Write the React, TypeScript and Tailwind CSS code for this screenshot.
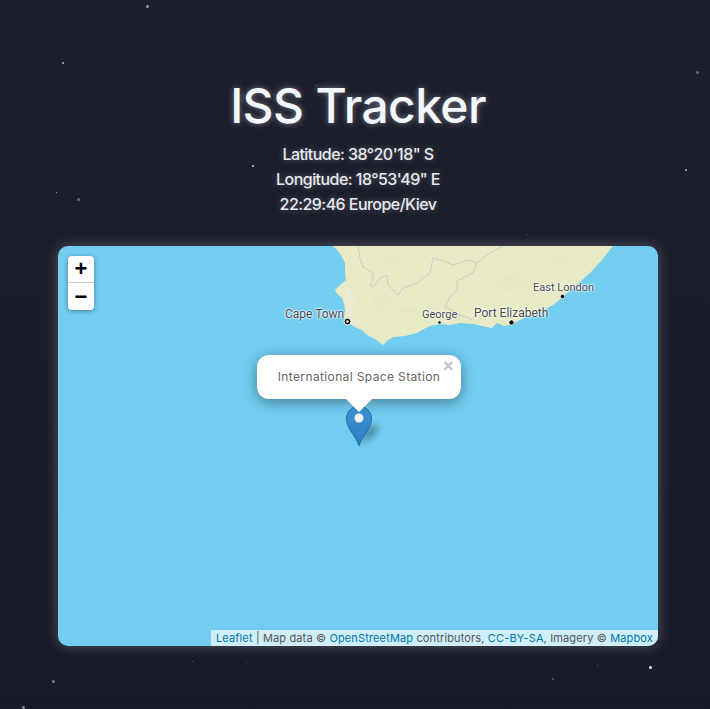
const stars: [number, number, number, number][] = [
  [147, 6, 3, 0.55],
  [63, 63, 2, 0.7],
  [56, 192, 1, 0.7],
  [78, 199, 3, 0.35],
  [125, 221, 1, 0.2],
  [206, 106, 1, 0.15],
  [697, 72, 3, 0.35],
  [686, 170, 2, 0.7],
  [558, 113, 1, 0.15],
  [527, 234, 1, 0.25],
  [253, 166, 2, 0.8],
  [650, 667, 3, 0.95],
  [597, 665, 1, 0.35],
  [553, 679, 2, 0.3],
  [246, 662, 1, 0.35],
  [192, 661, 1, 0.35],
  [53, 681, 3, 0.45],
  [23, 707, 3, 0.5],
  [441, 123, 1, 0.7],
  [316, 85, 1, 0.5],
];

const borders = [
  "M358 246 L360 258 L363 267 L373 273 L373 280 L370 286 L373 287 L380 278 L387 275 L388 285 L398 295 L403 288 L417 283 L430 273 L433 258 L443 261 L453 265 L467 260 L477 263 L487 255 L503 246",
  "M477 263 L473 273 L457 281 L457 290 L450 297 L445 307 L460 315 L458 320",
  "M460 315 L467 317 L472 320",
];

const patches = [
  "M375 290 L392 300 L385 312 L372 305 Z",
  "M398 308 L430 306 L425 313 L402 315 Z",
  "M490 280 L520 272 L530 285 L505 293 Z",
  "M550 258 L575 250 L570 262 L552 266 Z",
  "M380 260 L395 250 L400 262 L388 268 Z",
];

function CityLabel({ name, className }: { name: string; className: string }) {
  return (
    <span
      className={`absolute whitespace-nowrap font-['Roboto',sans-serif] text-[#4a4a52] [text-shadow:0_0_2px_#fff,0_0_2px_#fff,0_0_2px_#fff] ${className}`}
    >
      {name}
    </span>
  );
}

export default function App() {
  return (
    <div className="relative min-h-[709px] overflow-hidden bg-linear-to-b from-[#1c1f2c] to-[#191c28] font-['Inter',sans-serif]">
      {stars.map(([x, y, size, alpha]) => (
        <span
          key={`${x}-${y}`}
          className="absolute rounded-full bg-white"
          style={{ left: x - size / 2, top: y - size / 2, width: size, height: size, opacity: alpha }}
        />
      ))}

      <div className="relative flex flex-col items-center pl-[6px] pt-[75px]">
        <h1 className="text-[48px] leading-[62px] font-medium tracking-[-0.6px] text-[#f3f7ff] [text-shadow:0_0_6px_#ffffff66]">
          ISS Tracker
        </h1>
        <div className="mt-[5px] flex flex-col items-center text-[16px] leading-[25px] font-medium tracking-[-0.55px] text-[#e6e9f0] [text-shadow:0_0_6px_#ffffff50]">
          <p>Latitude: 38°20'18" S</p>
          <p>Longitude: 18°53'49" E</p>
          <p>22:29:46 Europe/Kiev</p>
        </div>

        <div className="relative mt-[29px] h-[400px] w-[600px] overflow-hidden rounded-[10px] bg-[#72cdf1] shadow-[0_0_14px_#ffffff40]">
          <svg className="absolute inset-0" width="600" height="400" viewBox="58 246 600 400">
            <path
              d="M333 246 L337 250 L341 255 L345 263 L345 272 L346 280 L340 285 L335 290 L337 294 L342 298 L344 304 L345 310 L344 320 L350 324 L357 328 L362 330 L367 335 L375 339 L383 345 L388 340 L393 337 L405 336 L417 333 L424 329 L430 326 L440 324 L450 325 L460 323 L473 324 L482 326 L492 328 L497 323 L504 326 L510 325 L520 320 L530 315 L542 311 L553 305 L562 298 L570 290 L580 282 L590 273 L602 260 L613 246 Z"
              fill="#e8eac5"
            />
            <path d="M345 285 L354 298 L352 316 L362 326 L350 322 L345 305 Z" fill="#eceBd2" />
            {patches.map((d) => (
              <path key={d} d={d} fill="#e5e8c0" />
            ))}
            {borders.map((d) => (
              <path key={d} d={d} fill="none" stroke="#c9ccc9" strokeWidth="1" />
            ))}
            <circle cx="347.5" cy="321.5" r="3.5" fill="#111" stroke="#fff" strokeWidth="1" />
            <circle cx="347.5" cy="321.5" r="1.2" fill="#fff" />
            <circle cx="439.5" cy="322.5" r="1.7" fill="#000" stroke="#fff" strokeWidth="0.8" />
            <circle cx="511.5" cy="322.5" r="2.6" fill="#000" stroke="#fff" strokeWidth="0.8" />
            <circle cx="562.5" cy="296.5" r="2.2" fill="#000" stroke="#fff" strokeWidth="0.8" />
          </svg>

          <CityLabel name="Cape Town" className="left-[227px] top-[59px] text-[12px]" />
          <CityLabel name="George" className="left-[364px] top-[61px] text-[11px]" />
          <CityLabel name="Port Elizabeth" className="left-[416px] top-[58px] text-[12px]" />
          <CityLabel name="East London" className="left-[475px] top-[34px] text-[11px]" />

          <div className="absolute left-[10px] top-[10px] flex w-[26px] flex-col overflow-hidden rounded-[4px] bg-white text-black shadow-[0_1px_5px_#0006]">
            <div className="flex h-[27px] items-center justify-center border-b border-[#ccc] font-['Liberation_Sans',sans-serif] text-[22px] font-bold leading-none">
              +
            </div>
            <div className="flex h-[27px] items-center justify-center font-['Liberation_Sans',sans-serif] text-[22px] font-bold leading-none">
              −
            </div>
          </div>

          <svg className="absolute left-[286px] top-[159px]" width="50" height="44" viewBox="0 0 50 44">
            <defs>
              <linearGradient id="pin" x1="0" y1="0" x2="0" y2="1">
                <stop offset="0" stopColor="#3f94d4" />
                <stop offset="1" stopColor="#2a7cc4" />
              </linearGradient>
              <filter id="blur" x="-50%" y="-50%" width="200%" height="200%">
                <feGaussianBlur stdDeviation="3.5" />
              </filter>
            </defs>
            <path d="M15 40 L24 20 L36 22 L28 32 Z" fill="#00000059" filter="url(#blur)" />
            <path
              d="M15 40.5 C12 31 2.5 24 2.5 13.5 C2.5 6.5 8 1.5 15 1.5 C22 1.5 27.5 6.5 27.5 13.5 C27.5 24 18 31 15 40.5 Z"
              fill="url(#pin)"
              stroke="#2a6a9e"
              strokeWidth="1"
            />
            <circle cx="15" cy="13" r="4.5" fill="#f2f2f2" />
          </svg>

          <div className="absolute left-[199px] top-[109px] flex h-[44px] w-[204px] items-center justify-center rounded-[12px] bg-white text-[12px] tracking-[0.37px] text-[#666] shadow-[0_3px_14px_#0006]">
            International Space Station
            <span className="absolute right-[7px] top-[2px] font-['Liberation_Sans',sans-serif] text-[18px] font-bold leading-[18px] text-[#c3c3c3]">
              ×
            </span>
          </div>
          <div className="absolute left-[288px] top-[153px] h-0 w-0 border-x-[13px] border-t-[13px] border-x-transparent border-t-white" />

          <div className="absolute bottom-0 right-0 flex h-[16px] items-center whitespace-pre bg-white/65 px-[5px] text-[11px] tracking-[0.14px] text-[#555]">
            <span className="text-[#0078a8]">Leaflet</span>
            <span> | Map data © </span>
            <span className="text-[#0078a8]">OpenStreetMap</span>
            <span> contributors, </span>
            <span className="text-[#0078a8]">CC-BY-SA</span>
            <span>, Imagery © </span>
            <span className="text-[#0078a8]">Mapbox</span>
          </div>
        </div>
      </div>
    </div>
  );
}
